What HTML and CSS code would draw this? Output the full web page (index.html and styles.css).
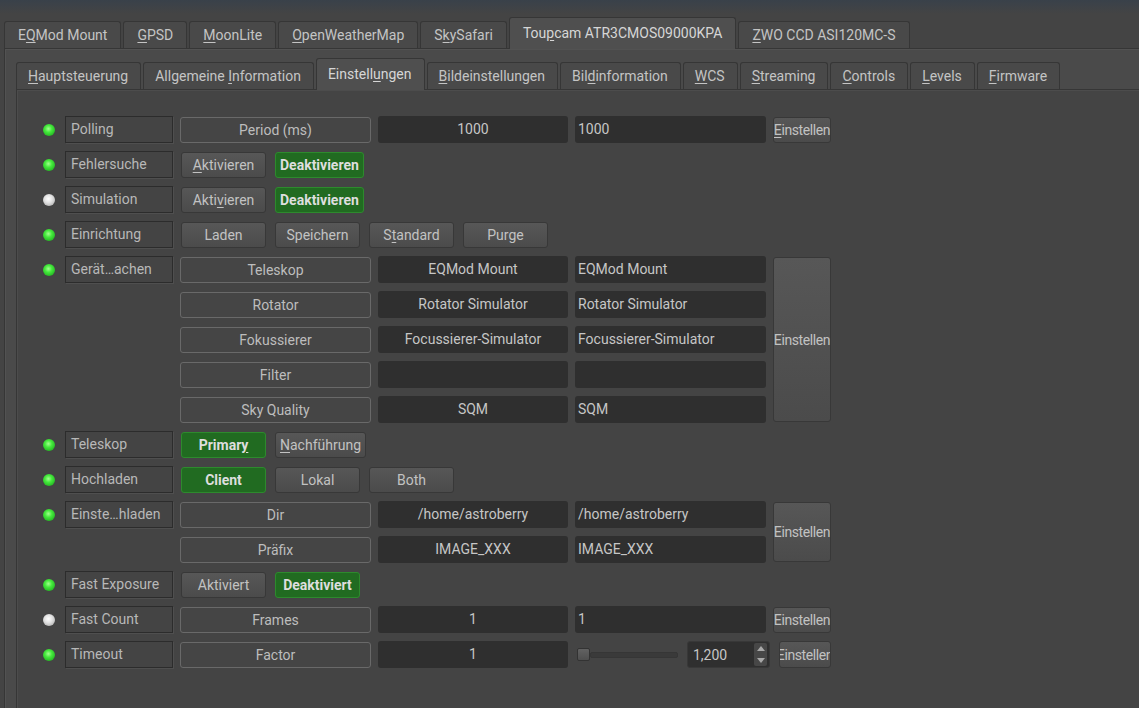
FILE: index.html
```html
<!DOCTYPE html>
<html lang="de">
<head>
    <meta charset="UTF-8">
    <title>INDI Control Panel</title>
    <link rel="stylesheet" href="styles.css">
</head>
<body>
    <div class="window">
        <!-- device tabs -->
        <div class="tabbar tabbar-top">
            <div class="tab">E<u>Q</u>Mod Mount</div>
            <div class="tab"><u>G</u>PSD</div>
            <div class="tab"><u>M</u>oonLite</div>
            <div class="tab"><u>O</u>penWeatherMap</div>
            <div class="tab">S<u>k</u>ySafari</div>
            <div class="tab active">Tou<u>p</u>cam ATR3CMOS09000KPA</div>
            <div class="tab"><u>Z</u>WO CCD ASI120MC-S</div>
        </div>

        <div class="pane outer-pane">
            <!-- group tabs -->
            <div class="tabbar tabbar-group">
                <div class="tab"><u>H</u>auptsteuerung</div>
                <div class="tab">Allgemeine <u>I</u>nformation</div>
                <div class="tab active">Einstell<u>u</u>ngen</div>
                <div class="tab"><u>B</u>ildeinstellungen</div>
                <div class="tab">Bil<u>d</u>information</div>
                <div class="tab"><u>W</u>CS</div>
                <div class="tab"><u>S</u>treaming</div>
                <div class="tab"><u>C</u>ontrols</div>
                <div class="tab"><u>L</u>evels</div>
                <div class="tab"><u>F</u>irmware</div>
            </div>

            <div class="pane inner-pane">
                <div class="props">
                    <!-- Polling -->
                    <span class="led ok"></span>
                    <div class="label">Polling</div>
                    <div class="prop">Period (ms)</div>
                    <div class="value">1000</div>
                    <div class="field">1000</div>
                    <button class="btn set"><span><u>E</u>instellen</span></button>

                    <!-- Fehlersuche -->
                    <span class="led ok"></span>
                    <div class="label">Fehlersuche</div>
                    <div class="switches">
                        <button class="btn"><u>A</u>ktivieren</button>
                        <button class="btn on">Deaktivieren</button>
                    </div>

                    <!-- Simulation -->
                    <span class="led idle"></span>
                    <div class="label">Simulation</div>
                    <div class="switches">
                        <button class="btn">Akti<u>v</u>ieren</button>
                        <button class="btn on">Deaktivieren</button>
                    </div>

                    <!-- Einrichtung -->
                    <span class="led ok"></span>
                    <div class="label">Einrichtung</div>
                    <div class="switches">
                        <button class="btn">Laden</button>
                        <button class="btn">Speichern</button>
                        <button class="btn">S<u>t</u>andard</button>
                        <button class="btn">Purge</button>
                    </div>

                    <!-- Geräte -->
                    <span class="led ok"></span>
                    <div class="label">Gerät…achen</div>
                    <div class="prop">Teleskop</div>
                    <div class="value">EQMod Mount</div>
                    <div class="field">EQMod Mount</div>
                    <button class="btn set span-5"><span>Einstellen</span></button>

                    <div class="prop">Rotator</div>
                    <div class="value">Rotator Simulator</div>
                    <div class="field">Rotator Simulator</div>

                    <div class="prop">Fokussierer</div>
                    <div class="value">Focussierer-Simulator</div>
                    <div class="field">Focussierer-Simulator</div>

                    <div class="prop">Filter</div>
                    <div class="value"></div>
                    <div class="field"></div>

                    <div class="prop">Sky Quality</div>
                    <div class="value">SQM</div>
                    <div class="field">SQM</div>

                    <!-- Teleskop -->
                    <span class="led ok"></span>
                    <div class="label">Teleskop</div>
                    <div class="switches">
                        <button class="btn on">Primar<u>y</u></button>
                        <button class="btn"><u>N</u>achführung</button>
                    </div>

                    <!-- Hochladen -->
                    <span class="led ok"></span>
                    <div class="label">Hochladen</div>
                    <div class="switches">
                        <button class="btn on">Client</button>
                        <button class="btn">Lokal</button>
                        <button class="btn">Both</button>
                    </div>

                    <!-- Upload settings -->
                    <span class="led ok"></span>
                    <div class="label">Einste…hladen</div>
                    <div class="prop">Dir</div>
                    <div class="value">/home/astroberry</div>
                    <div class="field">/home/astroberry</div>
                    <button class="btn set span-2"><span>Einstellen</span></button>

                    <div class="prop">Präfix</div>
                    <div class="value">IMAGE_XXX</div>
                    <div class="field">IMAGE_XXX</div>

                    <!-- Fast Exposure -->
                    <span class="led ok"></span>
                    <div class="label">Fast Exposure</div>
                    <div class="switches">
                        <button class="btn">Aktiviert</button>
                        <button class="btn on">Deaktiviert</button>
                    </div>

                    <!-- Fast Count -->
                    <span class="led idle"></span>
                    <div class="label">Fast Count</div>
                    <div class="prop">Frames</div>
                    <div class="value">1</div>
                    <div class="field">1</div>
                    <button class="btn set"><span>Einstellen</span></button>

                    <!-- Timeout -->
                    <span class="led ok"></span>
                    <div class="label">Timeout</div>
                    <div class="prop">Factor</div>
                    <div class="value">1</div>
                    <div class="slider-row">
                        <div class="slider">
                            <span class="handle"></span>
                            <span class="track"></span>
                        </div>
                        <div class="spinbox">
                            <span class="spin-text">1,200</span>
                            <span class="spin-arrows">
                                <span class="arrow up"></span>
                                <span class="arrow down"></span>
                            </span>
                        </div>
                        <button class="btn set narrow"><span>Einstellen</span></button>
                    </div>
                </div>
            </div>
        </div>
    </div>
</body>
</html>
```

FILE: styles.css
```css
:root {
    --bg: #444444;
    --tab-bg: #494949;
    --tab-active: #4f4f4f;
    --edge: #363636;
    --field: #2f2f2f;
    --text: #c0c0c0;
}

html, body {
    height: 100%;
}

body {
    margin: 0;
    background: linear-gradient(#39414a, #444444) top / 100% 14px no-repeat, var(--bg);
    color: var(--text);
    font-family: Roboto, "Liberation Sans", sans-serif;
    font-size: 14px;
    overflow: hidden;
}

u {
    text-decoration: underline;
    text-underline-offset: 2px;
}

.window {
    display: flex;
    flex-direction: column;
    height: 100%;
    padding: 18px 0 0 4px;
    box-sizing: border-box;
}

/* tabs */
.tabbar {
    display: flex;
    align-items: flex-end;
    gap: 2px;
    height: 31px;
    position: relative;
    z-index: 1;
    margin-bottom: -1px;
}

.tab {
    height: 27px;
    line-height: 27px;
    padding: 0 13px;
    box-sizing: border-box;
    background: var(--tab-bg);
    border: 1px solid var(--edge);
    border-bottom: none;
    border-radius: 3px 3px 0 0;
    color: #c4c4c4;
    white-space: nowrap;
    margin-bottom: 1px;
}

.tab.active {
    height: 32px;
    line-height: 30px;
    background: var(--tab-active);
    color: #d6d6d6;
    margin-bottom: 0;
}

.tabbar-group .tab {
    padding: 0 12px 0 11px;
}

.pane {
    flex: 1;
    display: flex;
    flex-direction: column;
    border-top: 1px solid var(--edge);
    border-left: 1px solid var(--edge);
}

.outer-pane {
    background: #4a4a4a;
    padding: 10px 0 0 11px;
    box-shadow: inset 1px 1px 0 #525252;
}

.inner-pane {
    background: var(--bg);
    padding: 26px 0 0 26px;
    box-shadow: inset 1px 1px 0 #4c4c4c;
}

/* property grid */
.props {
    display: grid;
    grid-template-columns: 15px 108px 191px 190px 191px 58px;
    grid-auto-rows: 27px;
    column-gap: 7px;
    row-gap: 8px;
}

.led {
    grid-column: 1;
    align-self: center;
    width: 12px;
    height: 12px;
    border-radius: 50%;
}

.led.ok {
    background: radial-gradient(circle at 45% 40%, #a4ff90 0, #45ea3c 35%, #22b322 80%, #198f19 100%);
}

.led.idle {
    background: radial-gradient(circle at 45% 40%, #ffffff 0, #e2e2e2 40%, #a9a9a9 90%);
}

.label {
    grid-column: 2;
    border: 1px solid #2c2c2c;
    box-shadow: 1px 1px 0 #4f4f4f;
    padding-left: 5px;
    line-height: 25px;
    color: #b8b8b8;
    white-space: nowrap;
    overflow: hidden;
}

.prop {
    grid-column: 3;
    border: 1px solid #696969;
    border-radius: 3px;
    background: #454545;
    text-align: center;
    line-height: 24px;
    height: 26px;
    box-sizing: border-box;
    align-self: start;
    margin-top: 1px;
    color: #bdbdbd;
}

.value,
.field {
    background: var(--field);
    border-radius: 3px;
    line-height: 27px;
    color: #c6c6c6;
    white-space: nowrap;
    overflow: hidden;
}

.value {
    grid-column: 4;
    text-align: center;
}

.field {
    grid-column: 5;
    padding-left: 3px;
}

.btn {
    font: inherit;
    color: #c2c2c2;
    height: 26px;
    min-width: 85px;
    padding: 0 4px;
    box-sizing: border-box;
    border: 1px solid #383838;
    border-radius: 3px;
    background: linear-gradient(#575757, #4b4b4b);
    display: flex;
    align-items: center;
    justify-content: center;
    white-space: nowrap;
    overflow: clip;
}

.btn.on {
    background: #216b21;
    border-color: #2d8a2d;
    color: #dedede;
    font-weight: bold;
}

.btn.set {
    grid-column: 6;
    min-width: 0;
    padding: 0;
    margin-top: 1px;
    letter-spacing: -0.4px;
}

/* label is a little wider than the button: let it spill evenly to both sides */
.btn.set span {
    margin: 0 -20px;
}

.btn.set.span-5 {
    grid-row: span 5;
    height: auto;
    margin-bottom: 1px;
}

.btn.set.span-2 {
    grid-row: span 2;
    height: auto;
    margin-bottom: 1px;
}

.switches {
    grid-column: 3 / -1;
    display: flex;
    gap: 9px;
    padding-left: 1px;
    align-items: center;
}

/* timeout row */
.slider-row {
    grid-column: 5 / -1;
    display: flex;
    align-items: center;
    gap: 9px;
}

.slider {
    width: 103px;
    display: flex;
    align-items: center;
    padding-left: 2px;
    box-sizing: border-box;
}

.handle {
    width: 13px;
    height: 13px;
    box-sizing: border-box;
    border: 1px solid #333;
    border-radius: 2px;
    background: linear-gradient(#626262, #4f4f4f);
}

.track {
    flex: 1;
    height: 4px;
    border: 1px solid #363636;
    border-radius: 2px;
    background: #3a3a3a;
}

.spinbox {
    width: 83px;
    height: 27px;
    box-sizing: border-box;
    display: flex;
    align-items: center;
    background: var(--field);
    border: 1px solid #383838;
    border-radius: 3px;
}

.spin-text {
    flex: 1;
    padding-left: 5px;
    color: #c6c6c6;
}

.spin-arrows {
    width: 13px;
    height: 23px;
    margin-right: 2px;
    display: flex;
    flex-direction: column;
    align-items: center;
    justify-content: space-around;
    background: #474747;
    border-radius: 2px;
}

.arrow {
    width: 0;
    height: 0;
    border-left: 4px solid transparent;
    border-right: 4px solid transparent;
}

.arrow.up {
    border-bottom: 5px solid #a8a8a8;
}

.arrow.down {
    border-top: 5px solid #a8a8a8;
}

.btn.set.narrow {
    width: 52px;
    height: 27px;
    margin-top: 0;
}
```
